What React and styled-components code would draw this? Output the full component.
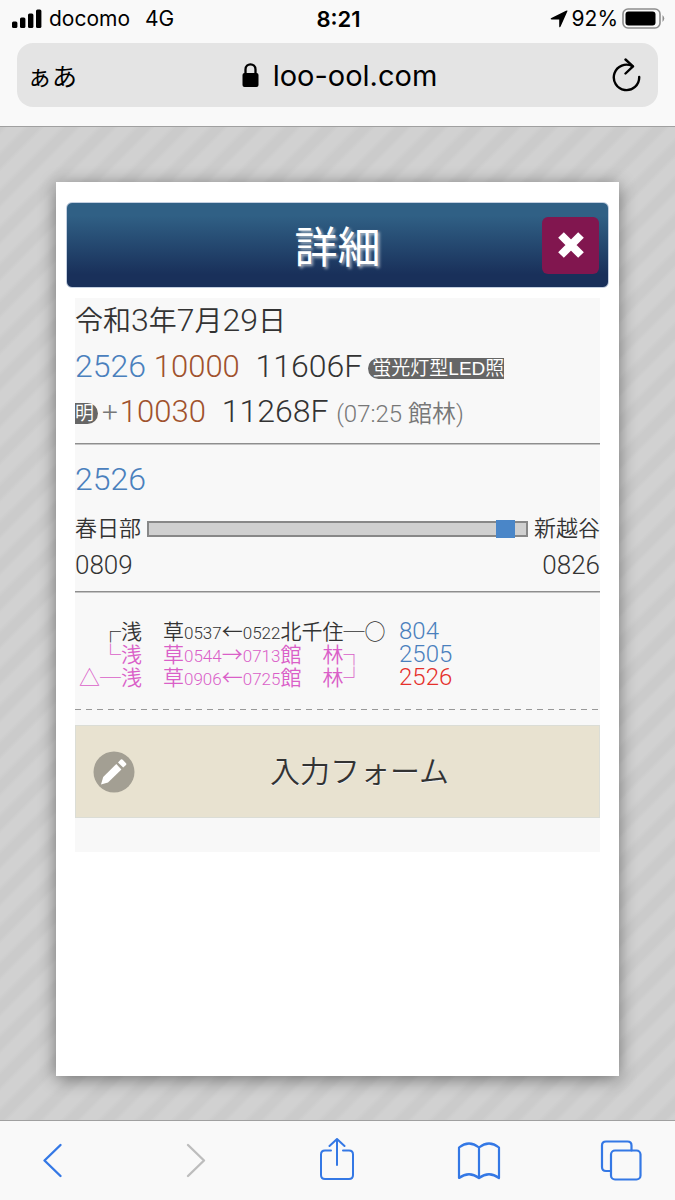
import React, { useState } from "react";
import styled, { createGlobalStyle } from "styled-components";

const GlobalStyle = createGlobalStyle`
  * {
    box-sizing: border-box;
  }
  body {
    margin: 0;
    color: #333;
    font-family: Roboto, "Noto Sans CJK JP", sans-serif;
    font-weight: 350;
  }
  button {
    margin: 0;
    padding: 0;
    border: 0;
    background: none;
    color: inherit;
    font: inherit;
    cursor: pointer;
  }
  svg {
    display: block;
  }
`;

const Page = styled.div`
  display: flex;
  flex-direction: column;
  min-height: 100vh;
`;

const BrowserTop = styled.header`
  padding-bottom: 19px;
  background: #f9f9f9;
  border-bottom: 1px solid #a0a0a0;
  color: #000;
  font-family: Inter, "Noto Sans CJK JP", sans-serif;
  font-weight: 400;
`;

const StatusBar = styled.div`
  display: grid;
  grid-template-columns: 1fr auto 1fr;
  align-items: center;
  height: 37px;
  padding: 0 10px 0 12px;
  font-size: 21px;
`;

const StatusGroup = styled.div`
  display: flex;
  align-items: center;
  justify-content: ${(p) => (p.$end ? "flex-end" : "flex-start")};
  gap: ${(p) => (p.$end ? "4px" : "7px")};
`;

const Network = styled.span`
  margin-left: 8px;
`;

const Clock = styled.time`
  font-size: 22px;
  font-weight: 600;
`;

const AddressBar = styled.div`
  display: grid;
  grid-template-columns: 1fr auto 1fr;
  align-items: center;
  height: 64px;
  margin: 6px 17px 0;
  padding: 0 16px 0 10px;
  border-radius: 16px;
  background: #e4e4e4;
`;

const TextSizeButton = styled.button`
  justify-self: start;
  padding-top: 4px;
  font-size: 25px;
  line-height: 32px;
`;

const Host = styled.div`
  display: flex;
  align-items: center;
  gap: 14px;
  padding-left: 10px;
  font-size: 29px;
`;

const ReloadButton = styled.button`
  justify-self: end;
`;

const Backdrop = styled.main`
  display: flex;
  flex: 1;
  padding: 55px 56px 44px;
  background: repeating-linear-gradient(
    135deg,
    #cbcbcb 0,
    #cbcbcb 2px,
    #d1d1d1 6px,
    #d1d1d1 16px,
    #cbcbcb 21px,
    #cbcbcb 26px
  );
`;

const Dialog = styled.section`
  flex: 1;
  min-width: 0;
  padding: 20px 10px;
  background: #fff;
  box-shadow: 0 3px 16px rgba(0, 0, 0, 0.45);
`;

const DialogHeader = styled.div`
  display: grid;
  grid-template-columns: 57px 1fr 57px;
  align-items: center;
  height: 86px;
  padding: 0 9px;
  border: 1px solid #c3cfe0;
  border-radius: 6px;
  background: linear-gradient(#306085 15%, #19305a 85%);
`;

const Title = styled.h1`
  grid-column: 2;
  margin: 0;
  padding-top: 6px;
  color: #fff;
  font-size: 43px;
  font-weight: 400;
  line-height: 56px;
  text-align: center;
  text-shadow: 2px 2px 3px rgba(255, 255, 255, 0.6);
`;

const CloseButton = styled.button`
  display: grid;
  place-items: center;
  height: 57px;
  border-radius: 6px;
  background: #81164f;
`;

const Content = styled.div`
  margin: 10px 9px 0;
  padding-bottom: 34px;
  background: #f8f8f8;
`;

const Summary = styled.div`
  font-size: 32px;
  line-height: 45px;
`;

const DateLine = styled.p`
  margin: 0;
`;

const Kanji = styled.span`
  font-size: 28px;
`;

const TrainLine = styled.p`
  margin: 0;
`;

const TrainLink = styled.a`
  color: #4a80bd;
  text-decoration: none;
`;

const Series = styled.span`
  margin-right: 8px;
  color: #a0522d;
  font-size: 31px;
`;

const Badge = styled.span`
  margin-left: 6px;
  padding: 0 4px;
  border-radius: 11px;
  background: #666;
  color: #fff;
  font-family: "Liberation Sans", "Noto Sans CJK JP", sans-serif;
  font-size: 19px;
  line-height: 21px;
  vertical-align: 2px;
`;

const Note = styled.span`
  color: #777;
  font-size: 24px;
`;

const Plus = styled(Note)`
  margin: 0 2px 0 4px;
  font-size: 28px;
`;

const Rule = styled.hr`
  height: 2px;
  margin: ${(p) => p.$space || "0"};
  border: 0;
  border-top: 1px solid #8e8e8e;
  border-bottom: 1px solid #c4c4c4;
`;

const DashedRule = styled.hr`
  height: 1px;
  margin: 0;
  border: 0;
  background: repeating-linear-gradient(90deg, #999 0 6px, transparent 6px 11px);
`;

const TrainHeading = styled.h2`
  margin: 0;
  font-size: 32px;
  font-weight: 350;
  line-height: 45px;
`;

const Section = styled.div`
  display: grid;
  grid-template-columns: auto 1fr auto;
  align-items: center;
  column-gap: 6px;
  margin-top: 9px;
  font-size: 22px;
  line-height: 36px;
`;

const Time = styled.time`
  font-size: 26px;
  grid-column: ${(p) => (p.$end ? "2 / 4" : "1")};
  text-align: ${(p) => (p.$end ? "right" : "left")};
`;

const Position = styled.input`
  appearance: none;
  width: 100%;
  height: 19px;
  margin: 0;
  background: none;

  &::-webkit-slider-runnable-track {
    height: 16px;
    border: 2px solid #888;
    background: #d0d0d0;
  }
  &::-webkit-slider-thumb {
    appearance: none;
    width: 19px;
    height: 18px;
    margin-top: -3px;
    background: #4a86c8;
  }
`;

const Duties = styled.table`
  margin: 26px 0 21px;
  border-collapse: collapse;
  font-size: 21px;
  line-height: 20px;
`;

const Route = styled.td`
  width: 324px;
  height: 23px;
  padding: 0 0 0 4px;
  color: ${(p) => (p.$pink ? "#da5fc8" : "#333")};
  font-family: "Noto Sans CJK JP", sans-serif;
  white-space: pre;
`;

const RouteTime = styled.span`
  font-family: Roboto, sans-serif;
  font-size: 17px;
  line-height: 1;
`;

const Duty = styled.td`
  padding: 0;
  font-size: 24px;
`;

const DutyLink = styled(TrainLink)`
  color: ${(p) => (p.$current ? "#e5302b" : "#4a80bd")};
`;

const FormButton = styled.button`
  display: grid;
  grid-template-columns: 44px 1fr;
  align-items: center;
  width: 100%;
  height: 93px;
  margin-top: 15px;
  padding: 0 16px;
  border: 1px solid #dbddd6;
  background: #e8e2d0;
  font-size: 30px;
  line-height: 40px;
  text-shadow: 0 1px 0 #f3f3f3;
`;

const Toolbar = styled.nav`
  display: flex;
  justify-content: space-between;
  height: 80px;
  padding: 0 32px 0 31px;
  border-top: 1px solid #a0a0a0;
  background: #f9f9f9;
  color: #3478e5;
`;

const ToolButton = styled.button`
  display: grid;
  place-items: center;
  width: 44px;

  &:disabled {
    color: #bdbdbd;
    cursor: default;
  }
`;

const stroke = {
  fill: "none",
  stroke: "currentColor",
  strokeWidth: 2.4,
  strokeLinecap: "round",
  strokeLinejoin: "round",
};

const SignalIcon = () => (
  <svg width="30" height="19" viewBox="0 0 30 19">
    <rect x="0" y="12.5" width="5.4" height="6.5" rx="1.5" />
    <rect x="8" y="8.5" width="5.4" height="10.5" rx="1.5" />
    <rect x="16" y="4.5" width="5.4" height="14.5" rx="1.5" />
    <rect x="24" y=".5" width="5.4" height="18.5" rx="1.5" />
  </svg>
);

const LocationIcon = () => (
  <svg width="18" height="18" viewBox="0 0 18 18">
    <path d="M17.4 1.2 L10.6 16.6 Q9.6 18 9.2 16.4 V9.6 H1.8 Q-.4 9 1.4 8 L16 .8 Q17.8 0 17.4 1.2Z" />
  </svg>
);

const BatteryIcon = () => (
  <svg width="43" height="22" viewBox="0 0 43 22">
    <rect x="1" y="1" width="37" height="19" rx="5" fill="none" stroke="#8d8d8d" strokeWidth="1.6" />
    <rect x="3.5" y="3.5" width="30" height="14" rx="3" />
    <path d="M40.5 7 Q44 10.5 40.5 14Z" fill="#8d8d8d" />
  </svg>
);

const LockIcon = () => (
  <svg width="17" height="24" viewBox="0 0 17 24">
    <path d="M3.5 11 V6.5 C3.5 -.3 13.5 -.3 13.5 6.5 V11" fill="none" stroke="#000" strokeWidth="2.3" />
    <rect x=".5" y="10" width="16" height="14" rx="2" />
  </svg>
);

const ReloadIcon = () => (
  <svg width="30" height="34" viewBox="0 0 30 34" {...stroke}>
    <path d="M27.2 19 A12.7 12.7 0 1 1 20.5 8.2" />
    <path d="M13.5 1.5 L21 8.4 L13.5 15.5" />
  </svg>
);

const CloseIcon = () => (
  <svg width="28" height="28" viewBox="0 0 28 28" stroke="#fff" strokeWidth="8">
    <path d="M4 4 L24 24 M24 4 L4 24" />
  </svg>
);

const PencilIcon = () => (
  <svg width="44" height="44" viewBox="0 0 44 44" fill="#fff">
    <circle cx="22" cy="22" r="20.5" fill="#a39f93" />
    <path d="M9 34.5 L11.2 27 L24.3 14 L29.4 19.4 L16 32.4Z" />
    <path d="M26 12.4 L28.8 9.6 Q29.8 8.8 30.7 9.8 L34 13.2 Q34.8 14.1 34 15 L31.2 17.6Z" />
  </svg>
);

const BackIcon = () => (
  <svg width="30" height="40" viewBox="0 0 30 40" {...stroke}>
    <path d="M22.5 4 L6.5 19.5 L22.5 35" />
  </svg>
);

const ForwardIcon = () => (
  <svg width="30" height="40" viewBox="0 0 30 40" {...stroke}>
    <path d="M8 4 L24 19.5 L8 35" />
  </svg>
);

const ShareIcon = () => (
  <svg width="36" height="46" viewBox="0 0 36 46" {...stroke} strokeWidth="2">
    <path d="M12 12.5 H6 Q2 12.5 2 16.5 V37 Q2 41 6 41 H30 Q34 41 34 37 V16.5 Q34 12.5 30 12.5 H24" />
    <path d="M18 27 V1 M10.5 8 L18 1 L25.5 8" />
  </svg>
);

const BookIcon = () => (
  <svg width="44" height="40" viewBox="0 0 44 40" {...stroke} strokeWidth="2.2">
    <path d="M22 6.5 Q12 -1.5 2 6.5 V37 Q12 29.5 22 37 Q32 29.5 42 37 V6.5 Q32 -1.5 22 6.5 V37" />
  </svg>
);

const TabsIcon = () => (
  <svg width="42" height="42" viewBox="0 0 42 42" {...stroke} strokeWidth="2.2">
    <path d="M11 31 H6 Q2 31 2 27 V5.5 Q2 1.5 6 1.5 H27.5 Q31.5 1.5 31.5 5.5 V10.5" />
    <rect x="11" y="10.5" width="29.5" height="29" rx="4" />
  </svg>
);

const duties = [
  { id: "804", before: "　┌浅　草", from: "0537", arrow: "←", to: "0522", after: "北千住─○" },
  { id: "2505", before: "　└浅　草", from: "0544", arrow: "→", to: "0713", after: "館　林┐", pink: true },
  { id: "2526", before: "△─浅　草", from: "0906", arrow: "←", to: "0725", after: "館　林┘", pink: true, current: true },
];

const App = () => {
  const [position, setPosition] = useState(97);

  return (
    <Page>
      <GlobalStyle />
      <BrowserTop>
        <StatusBar>
          <StatusGroup>
            <SignalIcon />
            <span>docomo</span>
            <Network>4G</Network>
          </StatusGroup>
          <Clock>8:21</Clock>
          <StatusGroup $end>
            <LocationIcon />
            <span>92%</span>
            <BatteryIcon />
          </StatusGroup>
        </StatusBar>
        <AddressBar>
          <TextSizeButton type="button">ぁあ</TextSizeButton>
          <Host>
            <LockIcon />
            <span>loo-ool.com</span>
          </Host>
          <ReloadButton type="button" aria-label="再読み込み">
            <ReloadIcon />
          </ReloadButton>
        </AddressBar>
      </BrowserTop>

      <Backdrop>
        <Dialog>
          <DialogHeader>
            <Title>詳細</Title>
            <CloseButton type="button" aria-label="閉じる">
              <CloseIcon />
            </CloseButton>
          </DialogHeader>
          <Content>
            <Summary>
              <DateLine>
                <Kanji>令和</Kanji>3<Kanji>年</Kanji>7<Kanji>月</Kanji>29<Kanji>日</Kanji>
              </DateLine>
              <TrainLine>
                <TrainLink href="#2526">2526</TrainLink> <Series>10000</Series> 11606F
                <Badge>
                  蛍光灯型LED照
                  <br />明
                </Badge>
                <Plus>+</Plus>
                <Series>10030</Series> 11268F <Note>(07:25 館林)</Note>
              </TrainLine>
            </Summary>
            <Rule $space="6px 0 12px" />
            <TrainHeading>
              <TrainLink href="#2526">2526</TrainLink>
            </TrainHeading>
            <Section>
              <label htmlFor="position">春日部</label>
              <Position
                id="position"
                type="range"
                value={position}
                onChange={(e) => setPosition(Number(e.target.value))}
              />
              <span>新越谷</span>
              <Time>0809</Time>
              <Time $end>0826</Time>
            </Section>
            <Rule $space="8px 0 0" />
            <Duties>
              <tbody>
                {duties.map((d) => (
                  <tr key={d.id}>
                    <Route $pink={d.pink}>
                      {d.before}
                      <RouteTime>{d.from}</RouteTime>
                      {d.arrow}
                      <RouteTime>{d.to}</RouteTime>
                      {d.after}
                    </Route>
                    <Duty>
                      <DutyLink href={`#${d.id}`} $current={d.current}>
                        {d.id}
                      </DutyLink>
                    </Duty>
                  </tr>
                ))}
              </tbody>
            </Duties>
            <DashedRule />
            <FormButton type="button">
              <PencilIcon />
              <span>入力フォーム</span>
            </FormButton>
          </Content>
        </Dialog>
      </Backdrop>

      <Toolbar>
        <ToolButton type="button" aria-label="戻る">
          <BackIcon />
        </ToolButton>
        <ToolButton type="button" aria-label="進む" disabled>
          <ForwardIcon />
        </ToolButton>
        <ToolButton type="button" aria-label="共有">
          <ShareIcon />
        </ToolButton>
        <ToolButton type="button" aria-label="ブックマーク">
          <BookIcon />
        </ToolButton>
        <ToolButton type="button" aria-label="タブ">
          <TabsIcon />
        </ToolButton>
      </Toolbar>
    </Page>
  );
};

export default App;
